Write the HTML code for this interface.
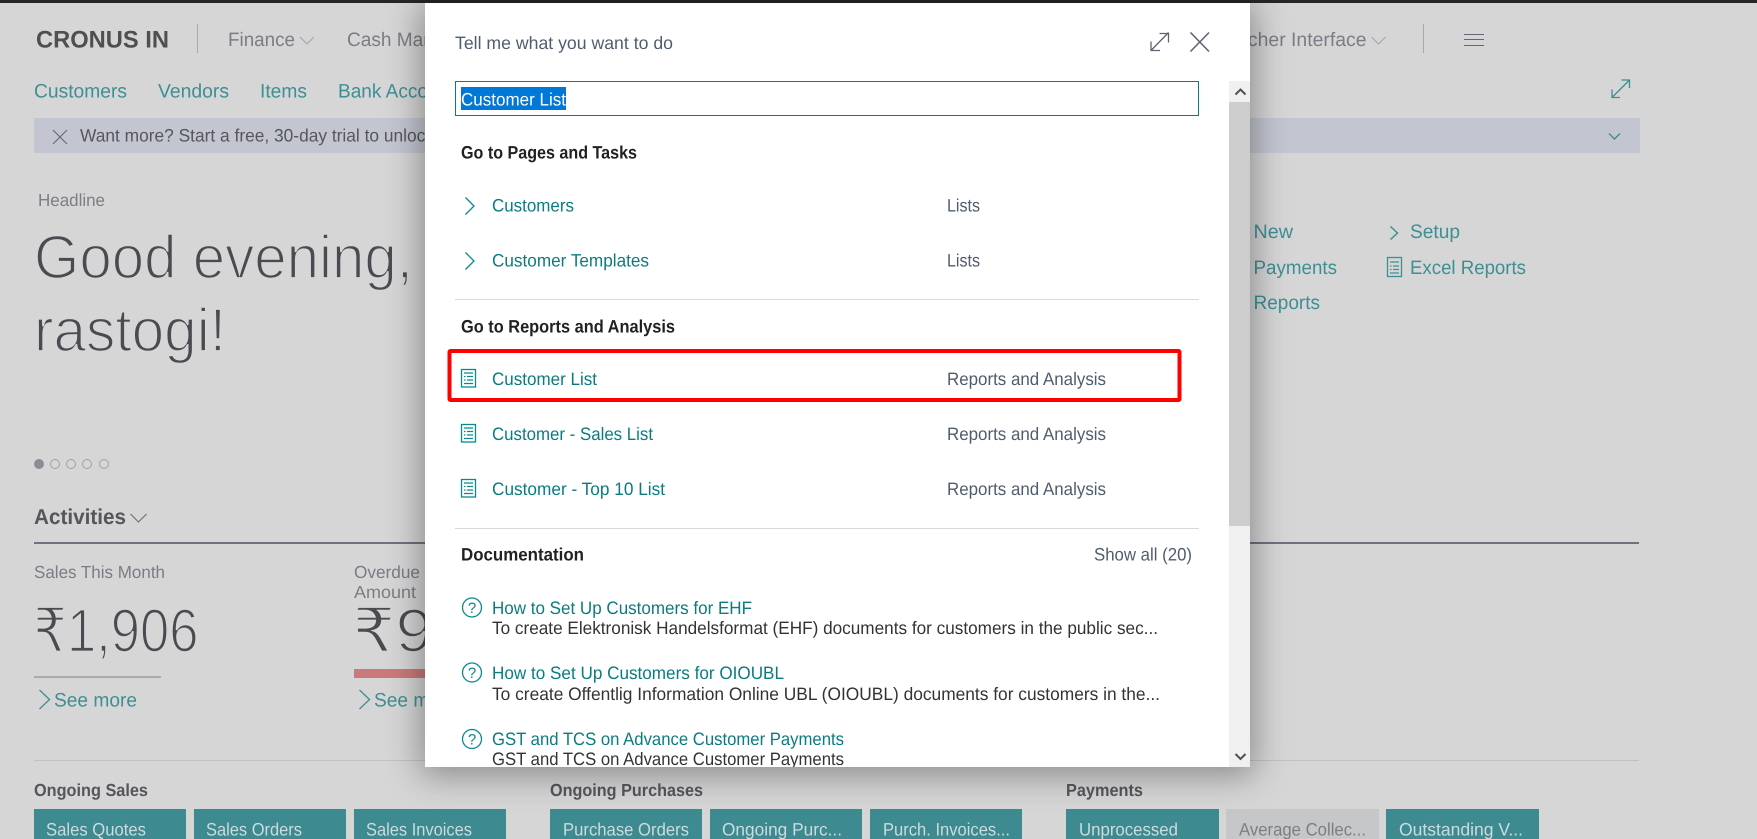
<!DOCTYPE html>
<html lang="en">
<head>
<meta charset="utf-8">
<title>Tell me what you want to do</title>
<style>
html,body{margin:0;padding:0;width:1757px;height:839px;overflow:hidden;background:#d6d6d6;}
svg{position:absolute;left:0;top:0;display:block;}
text{font-family:"Liberation Sans","DejaVu Sans",sans-serif;white-space:pre;text-rendering:geometricPrecision;}
#shadow{position:absolute;left:425px;top:3px;width:825px;height:764px;box-shadow:0 4px 32px 4px rgba(0,0,0,.36);background:#fff;}
.n{font-size:19.5px;fill:#7a7d85;}
.l{font-size:19.5px;fill:#3d8f93;}
.lt{font-size:61px;fill:#4a4b51;stroke:#d6d6d6;stroke-width:1.8px;}
.sm{font-size:17.5px;fill:#7a7d85;}
.b{font-size:17.5px;font-weight:700;fill:#55565c;}
.tile{font-size:18px;fill:#cbdcde;}
.h{font-size:18px;font-weight:700;fill:#212121;}
.m{font-size:18px;fill:#0a7c80;}
.g{font-size:18px;fill:#505c6e;}
.d{font-size:18px;fill:#333;}
.ic{fill:none;stroke:#0a8a8e;stroke-width:1.3;}
.icb{fill:none;stroke:#3d8f93;stroke-width:1.3;}
</style>
</head>
<body>
<svg width="1757" height="839" viewBox="0 0 1757 839" xmlns="http://www.w3.org/2000/svg">
<rect width="1757" height="839" fill="#d6d6d6"/>
<rect width="1757" height="3" fill="#262626"/>

<text x="36" y="47.5" font-size="24" font-weight="700" fill="#4f4f4f" textLength="133" lengthAdjust="spacingAndGlyphs">CRONUS IN</text>
<rect x="197" y="24" width="1" height="29" fill="#a9a9a9"/>
<text class="n" x="228" y="46" textLength="67" lengthAdjust="spacingAndGlyphs">Finance</text>
<path d="M300 37l7 7l7-7" fill="none" stroke="#a2a4aa" stroke-width="1"/>
<text class="n" x="347" y="46" textLength="161" lengthAdjust="spacingAndGlyphs">Cash Management</text>
<text class="n" x="1214.500" y="46" textLength="152" lengthAdjust="spacingAndGlyphs">Voucher Interface</text>
<path d="M1371.500 37l7 7l7-7" fill="none" stroke="#a2a4aa" stroke-width="1"/>
<rect x="1423" y="24" width="1" height="29" fill="#a9a9a9"/>
<path d="M1464 34.500h20M1464 39.500h20M1464 45.500h20" stroke="#63667a" stroke-width="1"/>

<text class="l" x="34" y="97.500" textLength="93" lengthAdjust="spacingAndGlyphs">Customers</text>
<text class="l" x="158" y="97.500" textLength="71" lengthAdjust="spacingAndGlyphs">Vendors</text>
<text class="l" x="260" y="97.500" textLength="47" lengthAdjust="spacingAndGlyphs">Items</text>
<text class="l" x="338" y="97.500" textLength="126" lengthAdjust="spacingAndGlyphs">Bank Accounts</text>
<g class="icb"><path d="M1612 97.500l17.500-17.500M1621.500 80h8v8M1612 89.500v8h8"/></g>

<rect x="34" y="118" width="1606" height="35" fill="#c3c6d1"/>
<path d="M53 130l14 14M67 130l-14 14" stroke="#66686f" stroke-width="1.100" fill="none"/>
<text x="80" y="141.500" font-size="18" fill="#55565c" textLength="354" lengthAdjust="spacingAndGlyphs">Want more? Start a free, 30-day trial to unlock</text>
<path d="M1609 133.500l5.500 5.500l5.500-5.500" fill="none" stroke="#3d8f93" stroke-width="1.400"/>

<text x="38" y="206" font-size="17.500" fill="#7b7e85" textLength="67" lengthAdjust="spacingAndGlyphs">Headline</text>
<text class="lt" x="34" y="278" textLength="379" lengthAdjust="spacingAndGlyphs">Good evening,</text>
<text class="lt" x="34" y="351" textLength="192" lengthAdjust="spacingAndGlyphs">rastogi!</text>

<circle cx="39" cy="464" r="5" fill="#8b8d96"/>
<g fill="none" stroke="#9fa1a8" stroke-width="1">
<circle cx="55" cy="464" r="4.500"/><circle cx="71" cy="464" r="4.500"/><circle cx="87" cy="464" r="4.500"/><circle cx="104" cy="464" r="4.500"/>
</g>

<text x="34" y="524" font-size="21.500" font-weight="700" fill="#55565c" textLength="92" lengthAdjust="spacingAndGlyphs">Activities</text>
<path d="M130.500 514l8 8l8-8" fill="none" stroke="#66686f" stroke-width="1"/>
<rect x="34" y="542" width="1605" height="2" fill="#6f727e"/>

<text class="sm" x="34" y="578" textLength="131" lengthAdjust="spacingAndGlyphs">Sales This Month</text>
<text class="lt" x="33.500" y="651.500" textLength="165" lengthAdjust="spacingAndGlyphs">₹1,906</text>
<rect x="34" y="676" width="127" height="2" fill="#a9abb0"/>
<path d="M39.500 690l10 9.500l-10 9.500" class="icb"/>
<text x="54" y="706.500" font-size="19.500" fill="#3d8f93" textLength="83" lengthAdjust="spacingAndGlyphs">See more</text>

<text class="sm" x="354" y="578" textLength="66" lengthAdjust="spacingAndGlyphs">Overdue</text>
<text class="sm" x="354" y="598" textLength="62" lengthAdjust="spacingAndGlyphs">Amount</text>
<text class="lt" x="352.500" y="651.500" textLength="137" lengthAdjust="spacingAndGlyphs">₹95,</text>
<rect x="354" y="669" width="100" height="9" fill="#ca7a7a"/>
<path d="M359.500 690l10 9.500l-10 9.500" class="icb"/>
<text x="374" y="706.500" font-size="19.500" fill="#3d8f93" textLength="83" lengthAdjust="spacingAndGlyphs">See more</text>

<rect x="34" y="760" width="1605" height="1" fill="#c0c1c3"/>

<text class="b" x="34" y="796" textLength="114" lengthAdjust="spacingAndGlyphs">Ongoing Sales</text>
<text class="b" x="550" y="796" textLength="153" lengthAdjust="spacingAndGlyphs">Ongoing Purchases</text>
<text class="b" x="1066" y="796" textLength="77" lengthAdjust="spacingAndGlyphs">Payments</text>

<g fill="#3d8a91">
<rect x="34" y="809" width="152" height="30"/><rect x="194" y="809" width="152" height="30"/><rect x="354" y="809" width="152" height="30"/>
<rect x="550" y="809" width="152" height="30"/><rect x="710" y="809" width="152" height="30"/><rect x="870" y="809" width="152" height="30"/>
<rect x="1066" y="809" width="153" height="30"/><rect x="1386" y="809" width="153" height="30"/>
</g>
<rect x="1226" y="809" width="153" height="30" fill="#c6c7c9"/>
<text class="tile" x="46" y="835.500" textLength="100" lengthAdjust="spacingAndGlyphs">Sales Quotes</text>
<text class="tile" x="206" y="835.500" textLength="96" lengthAdjust="spacingAndGlyphs">Sales Orders</text>
<text class="tile" x="366" y="835.500" textLength="106" lengthAdjust="spacingAndGlyphs">Sales Invoices</text>
<text class="tile" x="563" y="835.500" textLength="126" lengthAdjust="spacingAndGlyphs">Purchase Orders</text>
<text class="tile" x="722" y="835.500" textLength="120" lengthAdjust="spacingAndGlyphs">Ongoing Purc...</text>
<text class="tile" x="883" y="835.500" textLength="127" lengthAdjust="spacingAndGlyphs">Purch. Invoices...</text>
<text class="tile" x="1079" y="835.500" textLength="99" lengthAdjust="spacingAndGlyphs">Unprocessed</text>
<text class="tile" x="1239" y="835.500" textLength="127" lengthAdjust="spacingAndGlyphs" style="fill:#7c7e84">Average Collec...</text>
<text class="tile" x="1399" y="835.500" textLength="124" lengthAdjust="spacingAndGlyphs">Outstanding V...</text>

<text class="l" x="1253.500" y="238" textLength="39.500" lengthAdjust="spacingAndGlyphs">New</text>
<text class="l" x="1253.500" y="274" textLength="83.500" lengthAdjust="spacingAndGlyphs">Payments</text>
<text class="l" x="1253.500" y="309" textLength="66.500" lengthAdjust="spacingAndGlyphs">Reports</text>
<path d="M1390.500 226.500l7 6.500l-7 6.500" fill="none" stroke="#3d8f93" stroke-width="1.500"/>
<text class="l" x="1410" y="238" textLength="50" lengthAdjust="spacingAndGlyphs">Setup</text>
<g class="icb"><rect x="1387.500" y="257.500" width="14" height="19"/><path d="M1390 262h9M1390 266h1.500M1393 266h6M1390 269.500h1.500M1393 269.500h6M1390 273h9"/></g>
<text class="l" x="1410" y="274" textLength="116" lengthAdjust="spacingAndGlyphs">Excel Reports</text>
</svg>

<div id="shadow"></div>

<svg width="1757" height="839" viewBox="0 0 1757 839" xmlns="http://www.w3.org/2000/svg">
<defs><clipPath id="mc"><rect x="425" y="3" width="804" height="764"/></clipPath></defs>
<rect x="425" y="3" width="825" height="764" fill="#fff"/>

<text x="455" y="49" font-size="18" fill="#505c6e" textLength="218" lengthAdjust="spacingAndGlyphs">Tell me what you want to do</text>
<g fill="none" stroke="#5f6470" stroke-width="1.300">
<path d="M1151 50.500l17.500-18M1159.500 33.500h9v9M1151 41.500v9h9"/>
</g>
<path d="M1190.500 32.500l18.500 19M1209 32.500l-18.500 19" fill="none" stroke="#5f6470" stroke-width="1.600"/>

<rect x="455.500" y="81.500" width="743" height="34" fill="#fff" stroke="#0a7c80" stroke-width="1"/>
<rect x="461" y="87" width="105" height="23" fill="#0078d7"/>
<text x="461" y="105.500" font-size="18" fill="#fff" textLength="105" lengthAdjust="spacingAndGlyphs">Customer List</text>

<rect x="1229" y="81" width="21" height="686" fill="#f0f0f0"/>
<rect x="1229" y="102" width="21" height="424" fill="#cdcdcd"/>
<path d="M1235.500 94.500l5-5l5 5" fill="none" stroke="#505050" stroke-width="2"/>
<path d="M1235.500 754l5 5l5-5" fill="none" stroke="#505050" stroke-width="2"/>

<g clip-path="url(#mc)">
<text class="h" x="461" y="158.500" textLength="176" lengthAdjust="spacingAndGlyphs">Go to Pages and Tasks</text>
<path class="ic" d="M465.500 197.500l8.500 8.500l-8.500 8.500"/>
<text class="m" x="492" y="211.500" textLength="82" lengthAdjust="spacingAndGlyphs">Customers</text>
<text class="g" x="947" y="211.500" textLength="33" lengthAdjust="spacingAndGlyphs">Lists</text>
<path class="ic" d="M465.500 252.500l8.500 8.500l-8.500 8.500"/>
<text class="m" x="492" y="266.500" textLength="157" lengthAdjust="spacingAndGlyphs">Customer Templates</text>
<text class="g" x="947" y="266.500" textLength="33" lengthAdjust="spacingAndGlyphs">Lists</text>
<rect x="455" y="299" width="744" height="1" fill="#d9d9d9"/>

<text class="h" x="461" y="332.500" textLength="214" lengthAdjust="spacingAndGlyphs">Go to Reports and Analysis</text>

<g class="ic">
<rect x="461.500" y="369.500" width="14" height="17.500"/><path d="M464 373h9M464 376.500h1.500M467 376.500h6M464 380h1.500M467 380h6M464 383.500h9"/>
<rect x="461.500" y="424.500" width="14" height="17.500"/><path d="M464 428h9M464 431.500h1.500M467 431.500h6M464 435h1.500M467 435h6M464 438.500h9"/>
<rect x="461.500" y="479.500" width="14" height="17.500"/><path d="M464 483h9M464 486.500h1.500M467 486.500h6M464 490h1.500M467 490h6M464 493.500h9"/>
</g>
<text class="m" x="492" y="385" textLength="105" lengthAdjust="spacingAndGlyphs">Customer List</text>
<text class="g" x="947" y="385" textLength="159" lengthAdjust="spacingAndGlyphs">Reports and Analysis</text>
<text class="m" x="492" y="440" textLength="161" lengthAdjust="spacingAndGlyphs">Customer - Sales List</text>
<text class="g" x="947" y="440" textLength="159" lengthAdjust="spacingAndGlyphs">Reports and Analysis</text>
<text class="m" x="492" y="495" textLength="173" lengthAdjust="spacingAndGlyphs">Customer - Top 10 List</text>
<text class="g" x="947" y="495" textLength="159" lengthAdjust="spacingAndGlyphs">Reports and Analysis</text>
<rect x="449.500" y="351" width="730" height="49" fill="none" stroke="#f00" stroke-width="4" rx="1"/>
<rect x="455" y="528" width="744" height="1" fill="#d9d9d9"/>

<text class="h" x="461" y="560.500" textLength="123" lengthAdjust="spacingAndGlyphs">Documentation</text>
<text class="g" x="1094" y="560.500" textLength="98" lengthAdjust="spacingAndGlyphs">Show all (20)</text>

<g class="ic">
<circle cx="472" cy="607.500" r="9.500"/><circle cx="472" cy="672.500" r="9.500"/><circle cx="472" cy="739" r="9.500"/>
</g>
<g font-size="15" fill="#0a8a8e" text-anchor="middle">
<text x="472" y="613">?</text><text x="472" y="678">?</text><text x="472" y="744.500">?</text>
</g>
<text class="m" x="492" y="614" textLength="260" lengthAdjust="spacingAndGlyphs">How to Set Up Customers for EHF</text>
<text class="d" x="492" y="634" textLength="666" lengthAdjust="spacingAndGlyphs">To create Elektronisk Handelsformat (EHF) documents for customers in the public sec...</text>
<text class="m" x="492" y="679" textLength="292" lengthAdjust="spacingAndGlyphs">How to Set Up Customers for OIOUBL</text>
<text class="d" x="492" y="700" textLength="668" lengthAdjust="spacingAndGlyphs">To create Offentlig Information Online UBL (OIOUBL) documents for customers in the...</text>
<text class="m" x="492" y="745" textLength="352" lengthAdjust="spacingAndGlyphs">GST and TCS on Advance Customer Payments</text>
<text class="d" x="492" y="765" textLength="352" lengthAdjust="spacingAndGlyphs">GST and TCS on Advance Customer Payments</text>
</g>
</svg>
</body>
</html>
